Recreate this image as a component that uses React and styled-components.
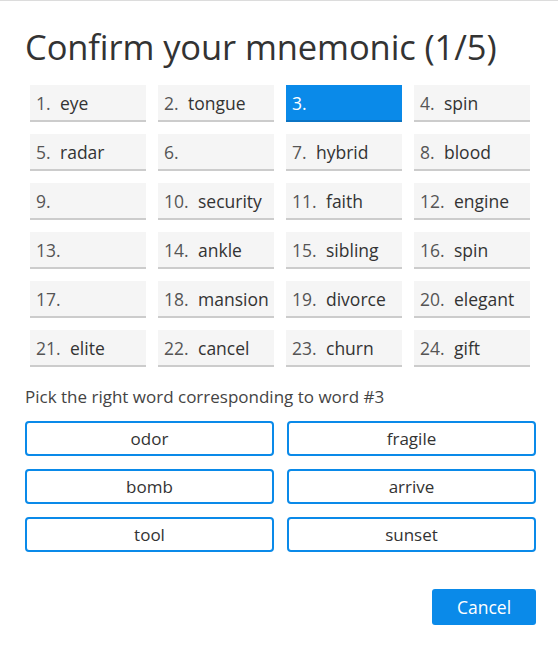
import React from "react";
import styled, { createGlobalStyle } from "styled-components";

const Global = createGlobalStyle`
  html, body { margin: 0; padding: 0; background: #fff; }
  body { font-family: "Open Sans", "Noto Sans", sans-serif; color: #333; }
`;

const Page = styled.div`
  width: 558px;
  height: 672px;
  box-sizing: border-box;
  border-top: 1px solid #dcdcdc;
  padding: 0 22px 0 25px;
  display: flex;
  flex-direction: column;
`;

const Title = styled.h1`
  margin: 25px 0 0 0;
  font-size: 34.5px;
  font-weight: 400;
  line-height: 42px;
  color: #333;
  letter-spacing: -0.1px;
  white-space: nowrap;
`;

const Grid = styled.div`
  margin: 17px 0 0 5px;
  display: grid;
  grid-template-columns: repeat(4, 116px);
  grid-auto-rows: 37px;
  column-gap: 12px;
  row-gap: 12px;
`;

const Cell = styled.div`
  box-sizing: border-box;
  background: ${(p) => (p.$active ? "#0a8ae9" : "#f5f5f5")};
  border-bottom: 2px solid ${(p) => (p.$active ? "#0b74c4" : "#cccccc")};
  display: flex;
  align-items: center;
  padding: 0 0 0 6px;
  font-size: 17.5px;
  color: ${(p) => (p.$active ? "#fff" : "#333")};
`;

const Num = styled.span`
  color: ${(p) => (p.$active ? "#fff" : "#555")};
  width: ${(p) => (p.$wide ? "34px" : "24px")};
  flex: none;
`;

const Word = styled.span`
  color: #333;
`;

const Prompt = styled.div`
  margin-top: 20px;
  font-size: 17px;
  color: #444;
  line-height: 20px;
`;

const Choices = styled.div`
  margin-top: 14px;
  display: grid;
  grid-template-columns: repeat(2, 249px);
  column-gap: 13px;
  row-gap: 13px;
  grid-auto-rows: 35px;
`;

const Choice = styled.button`
  box-sizing: border-box;
  height: 35px;
  background: #fff;
  border: 2px solid #0a8ae9;
  border-radius: 4px;
  font-family: inherit;
  font-size: 17px;
  color: #333;
  padding: 0;
  cursor: pointer;
`;

const Footer = styled.div`
  margin-top: 37px;
  display: flex;
  justify-content: flex-end;
`;

const Cancel = styled.button`
  width: 104px;
  height: 36px;
  background: #0a8ae9;
  border: none;
  border-radius: 3px;
  color: #fff;
  font-family: inherit;
  font-size: 17.5px;
  padding: 0;
`;

const words = [
  "eye", "tongue", "", "spin",
  "radar", "", "hybrid", "blood",
  "", "security", "faith", "engine",
  "", "ankle", "sibling", "spin",
  "", "mansion", "divorce", "elegant",
  "elite", "cancel", "churn", "gift",
];

const choices = ["odor", "fragile", "bomb", "arrive", "tool", "sunset"];

export default function App() {
  return (
    <>
      <Global />
      <Page>
        <Title>Confirm your mnemonic (1/5)</Title>
        <Grid>
          {words.map((w, i) => {
            const active = i === 2;
            return (
              <Cell key={i} $active={active}>
                <Num $active={active} $wide={i >= 9}>{i + 1}.</Num>
                <Word>{w}</Word>
              </Cell>
            );
          })}
        </Grid>
        <Prompt>Pick the right word corresponding to word #3</Prompt>
        <Choices>
          {choices.map((c) => (
            <Choice key={c}>{c}</Choice>
          ))}
        </Choices>
        <Footer>
          <Cancel>Cancel</Cancel>
        </Footer>
      </Page>
    </>
  );
}
